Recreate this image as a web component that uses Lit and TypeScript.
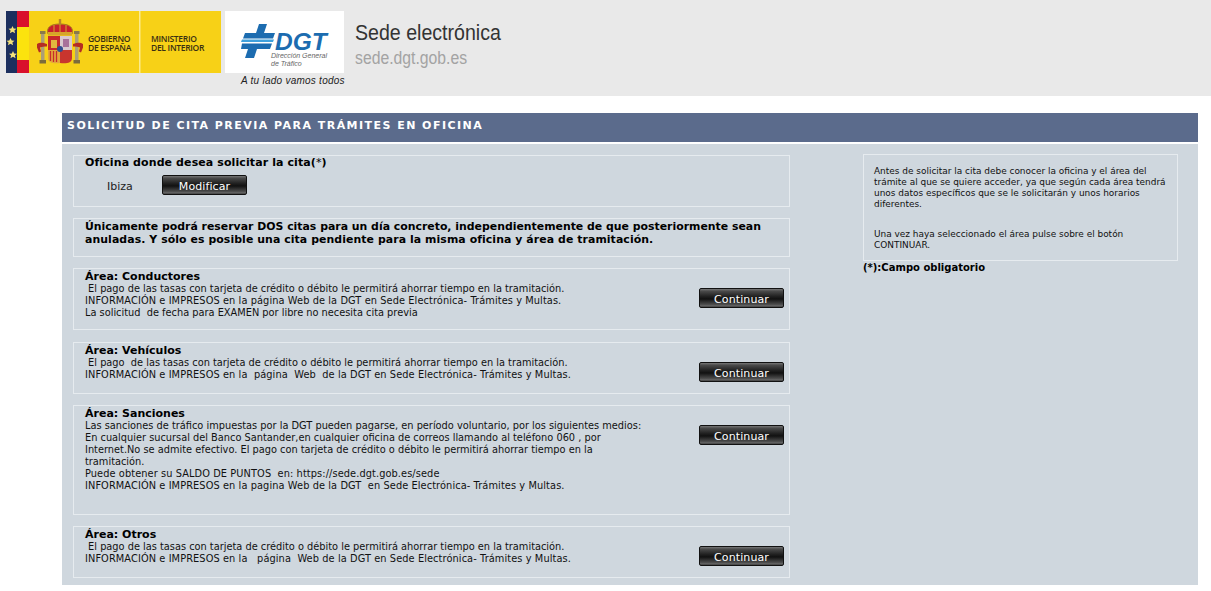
import { LitElement, html, css, svg } from "lit";
import { customElement } from "lit/decorators.js";

const star = "l1.2 2.500 2.800.2-2.100 1.800.7 2.700-2.600-1.500-2.600 1.500.7-2.700-2.100-1.800 2.800-.2z";

const govLogo = svg`<svg class="logo-svg" width="215" height="62" viewBox="0 0 215 62">
  <rect width="215" height="62" fill="#f7d117"/>
  <rect width="11" height="62" fill="#1c2f5e"/>
  <rect x="11" width="12" height="62" fill="#d9102c"/>
  <rect x="11" y="16" width="12" height="33" fill="#fbe30e"/>
  <g fill="#f4e27a">
    <path d=${"M6.500 15" + star}/>
    <path d=${"M4.500 27" + star}/>
    <path d=${"M7 40" + star}/>
  </g>
  <rect x="133" width="1.500" height="62" fill="#fbeb8e"/>
  <g transform="translate(32 8)">
    <path d="M10 15c-2-7 3-10 12-10s14 3 12 10z" fill="#c8202c" stroke="#a8801c" stroke-width="1"/>
    <path d="M16 6v8M22 5v9M28 6v8" stroke="#d6a52a" stroke-width="1"/>
    <rect x="10" y="13" width="24" height="3.500" fill="#d6a52a"/>
    <rect x="20.800" y="0" width="2.400" height="6" fill="#b5842a"/>
    <rect x="2" y="12" width="5.500" height="3" fill="#8a7a4a"/>
    <rect x="3" y="15" width="3.500" height="27" fill="#ab9f78"/>
    <rect x="1.500" y="41" width="6.500" height="3.500" fill="#7b6c3c"/>
    <rect x="36" y="12" width="5.500" height="3" fill="#8a7a4a"/>
    <rect x="37" y="15" width="3.500" height="27" fill="#ab9f78"/>
    <rect x="35.500" y="41" width="6.500" height="3.500" fill="#7b6c3c"/>
    <path d="M10 17h12v14H10z" fill="#c72a2c"/>
    <path d="M22 17h12v14H22z" fill="#d9c9cf"/>
    <path d="M10 31h12v13c-6 1-12 0-12-5z" fill="#e3a83a"/>
    <path d="M22 31h12v8c0 5-6 6-12 5z" fill="#c8352e"/>
    <path d="M13 21h6v8h-6z" fill="#e2b93e"/>
    <path d="M25 20h6v8h-6z" fill="#a8719a"/>
    <path d="M12.500 32v10M15.500 32v11M18.500 32v11" stroke="#c72a2c" stroke-width="1.300"/>
    <circle cx="22" cy="30" r="3" fill="#2f4d8f"/>
    <path d="M-1 25c3-2 6-1 10 0v2.500c-3 0-5 0-7 1l1 4-2 1-2-5zM45 25c-3-2-6-1-10 0v2.500c3 0 5 0 7 1l-1 4 2 1 2-5z" fill="#b62c22"/>
  </g>
</svg>`;

const dgtMark = svg`<svg class="mark" width="36" height="34" viewBox="0 0 36 34">
  <path d="M18 0h8l-3 9h11l-2 5.500H2L4 9h11z" fill="#1c6cb0"/>
  <path d="M1 15.500h32l-1 2.500H0z" fill="#3fa0dc"/>
  <path d="M1 19.500h30L29 25H16l-3 9H4l3-9H0z" fill="#1c6cb0"/>
</svg>`;

const areas = [
  {
    title: "Área: Conductores",
    lines: [
      "\u00a0El pago de las tasas con tarjeta de crédito o débito le permitirá ahorrar tiempo en la tramitación.",
      "INFORMACIÓN e IMPRESOS en la página Web de la DGT en Sede Electrónica- Trámites y Multas.",
      "La solicitud\u00a0 de fecha para EXAMEN por libre no necesita cita previa",
    ],
    h: 62,
    mt: 11,
  },
  {
    title: "Área: Vehículos",
    lines: [
      "\u00a0El pago\u00a0 de las tasas con tarjeta de crédito o débito le permitirá ahorrar tiempo en la tramitación.",
      "INFORMACIÓN e IMPRESOS en la\u00a0 página\u00a0 Web\u00a0 de la DGT en Sede Electrónica- Trámites y Multas.",
    ],
    h: 52,
    mt: 12,
  },
  {
    title: "Área: Sanciones",
    lines: [
      "Las sanciones de tráfico impuestas por la DGT pueden pagarse, en período voluntario, por los siguientes medios:",
      "En cualquier sucursal del Banco Santander,en cualquier oficina de correos llamando al teléfono 060 , por",
      "Internet.No se admite efectivo. El pago con tarjeta de crédito o débito le permitirá ahorrar tiempo en la",
      "tramitación.",
      "Puede obtener su SALDO DE PUNTOS\u00a0 en: https://sede.dgt.gob.es/sede",
      "INFORMACIÓN e IMPRESOS en la pagina Web de la DGT\u00a0 en Sede Electrónica- Trámites y Multas.",
    ],
    h: 110,
    mt: 11,
  },
  {
    title: "Área: Otros",
    lines: [
      "\u00a0El pago de las tasas con tarjeta de crédito o débito le permitirá ahorrar tiempo en la tramitación.",
      "INFORMACIÓN e IMPRESOS en la\u00a0\u00a0 página\u00a0 Web de la DGT en Sede Electrónica- Trámites y Multas.",
    ],
    h: 52,
    mt: 11,
  },
];

const spaced = (l: string) => l.startsWith("INFORMACIÓN") || l.startsWith("Puede");

@customElement("app-root")
export class AppRoot extends LitElement {
  static styles = css`
    :host { display: block; width: 1211px; height: 591px; background: #fff; overflow: hidden;
      font-family: "DejaVu Sans", Verdana, sans-serif; color: #111; }
    * { box-sizing: border-box; }
    .top { height: 96px; background: #e9e9e9; display: flex; padding: 11px 0 0 6px; font-family: "Liberation Sans", Arial, sans-serif; }
    .logo-svg { display: block; }
    .gov { position: relative; width: 215px; height: 62px; }
    .gov span { position: absolute; font: 600 8.500px/9px "Open Sans", sans-serif; color: #3a2f12; top: 23px; letter-spacing: -.3px; }
    .gov .a { left: 82px; }
    .gov .b { left: 145px; }
    .dgtcol { margin-left: 4px; width: 119px; position: relative; }
    .white { width: 119px; height: 62px; background: #fff; position: relative; }
    .mark { position: absolute; left: 16px; top: 13px; }
    .dgt { position: absolute; left: 50px; top: 21px; font: italic 700 24.500px/20px "Liberation Sans", sans-serif; color: #1c6cb0; }
    .sub { position: absolute; left: 46px; top: 41px; font: italic 7px/8px "Liberation Sans", sans-serif; color: #666; white-space: nowrap; }
    .tag { position: absolute; left: 16px; top: 64px; font: italic 10px/12px "Liberation Sans", sans-serif; letter-spacing: .25px; color: #222; white-space: nowrap; }
    .site { margin-left: 11px; padding-top: 10px; }
    .site h1, .site p { transform-origin: left center; white-space: nowrap; }
    .site h1 { margin: 0; font: 400 22px/24px "Liberation Sans", sans-serif; color: #333; transform: scaleX(.89); }
    .site p { margin: 2px 0 0; font: 400 18px/22px "Liberation Sans", sans-serif; color: #a3a3a3; transform: scaleX(.875); }
    .panel { margin: 17px 0 0 62px; width: 1136px; }
    .title { height: 29px; background: #5b6b8c; color: #fff; font-weight: 700; font-size: 11px; line-height: 25px; padding-left: 5px; letter-spacing: 1.460px; }
    .body { margin-top: 2px; background: #cfd7de; height: 441px; display: flex; padding: 10px 0 0 11px; }
    .left { width: 717px; }
    .box { border: 1px solid #e6ebef; padding-left: 11px; position: relative; }
    .h { font-weight: 700; font-size: 11px; line-height: 12px; color: #000; }
    .h i { font-style: normal; font-weight: 400; }
    .office { height: 52px; margin-top: 1px; padding-top: 1px; }
    .office .h { letter-spacing: .1px; }
    .row { display: flex; align-items: center; margin-top: 6px; }
    .row span { font-size: 11px; margin-left: 22px; width: 55px; color: #222; padding-top: 2px; }
    .btn { width: 85px; height: 20px; border: 1px solid #111; border-radius: 2px; color: #fff; font-size: 11px; line-height: 21px; text-align: center; letter-spacing: .1px;
      background: linear-gradient(#777 0, #4a4a4a 12%, #222 40%, #111 55%, #4a4a4a 85%, #6a6a6a 95%, #2a2a2a 100%); }
    .notice { height: 39px; margin-top: 11px; font-weight: 700; font-size: 10.900px; line-height: 13px; padding-top: 1px; color: #000; white-space: nowrap; }
    .notice span { letter-spacing: .08px; }
    .area .txt { font-size: 9.800px; line-height: 12px; color: #111; white-space: nowrap; }
    .area .wide { letter-spacing: .09px; }
    .area .h { padding-top: 2px; }
    .area .btn { position: absolute; left: 625px; top: 19px; }
    .right { margin-left: 73px; width: 315px; }
    .info { border: 1px solid #e6ebef; height: 107px; padding: 11px 10px; font-size: 8.950px; line-height: 11px; color: #111; white-space: nowrap; }
    .info p { margin: 0 0 19px; }
    .req { font-weight: 700; font-size: 10px; line-height: 12px; margin-top: 1px; color: #000; }
  `;

  render() {
    return html`
      <div class="top">
        <div class="gov">${govLogo}<span class="a">GOBIERNO<br />DE ESPAÑA</span><span class="b">MINISTERIO<br />DEL INTERIOR</span></div>
        <div class="dgtcol">
          <div class="white">${dgtMark}<div class="dgt">DGT</div><div class="sub">Dirección General<br />de Tráfico</div></div>
          <div class="tag">A tu lado vamos todos</div>
        </div>
        <div class="site"><h1>Sede electrónica</h1><p>sede.dgt.gob.es</p></div>
      </div>
      <div class="panel">
        <div class="title">SOLICITUD DE CITA PREVIA PARA TRÁMITES EN OFICINA</div>
        <div class="body">
          <div class="left">
            <div class="box office">
              <div class="h">Oficina donde desea solicitar la cita(<i>*</i>)</div>
              <div class="row"><span>Ibiza</span><div class="btn">Modificar</div></div>
            </div>
            <div class="box notice">Únicamente podrá reservar DOS citas para un día concreto, independientemente de que posteriormente sean<br /><span>anuladas. Y sólo es posible una cita pendiente para la misma oficina y área de tramitación.</span></div>
            ${areas.map((a) => html`
              <div class="box area" style="height:${a.h}px;margin-top:${a.mt}px">
                <div class="h">${a.title}</div>
                <div class="txt">${a.lines.map((l) => html`<span class=${spaced(l) ? "wide" : ""}>${l}</span><br />`)}</div>
                <div class="btn">Continuar</div>
              </div>`)}
          </div>
          <div class="right">
            <div class="info">
              <p>Antes de solicitar la cita debe conocer la oficina y el área del<br />trámite al que se quiere acceder, ya que según cada área tendrá<br />unos datos específicos que se le solicitarán y unos horarios<br />diferentes.</p>
              <p>Una vez haya seleccionado el área pulse sobre el botón<br />CONTINUAR.</p>
            </div>
            <div class="req">(*):Campo obligatorio</div>
          </div>
        </div>
      </div>
    `;
  }
}
